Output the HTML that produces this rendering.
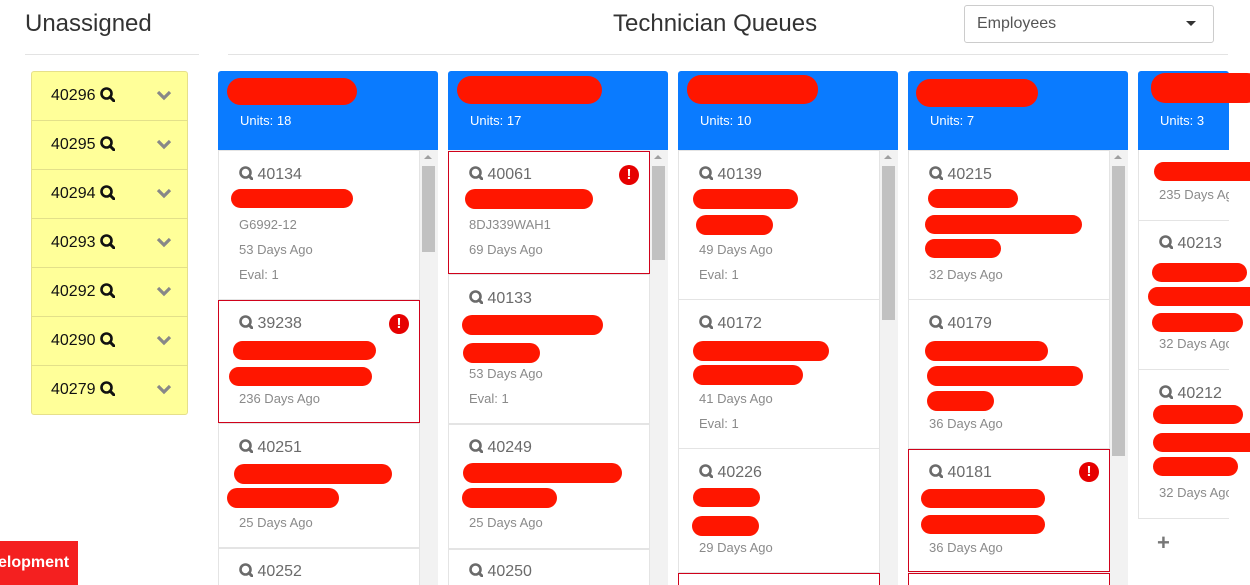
<!DOCTYPE html>
<html><head><meta charset="utf-8"><style>
*{margin:0;padding:0;box-sizing:border-box}
html,body{width:1250px;height:585px;overflow:hidden}
body{background:#fff;font-family:"Liberation Sans",sans-serif;position:relative}
.a{position:absolute}
.t{position:absolute;white-space:nowrap}
.b{position:absolute;background:#ff1600;border-radius:12px}
.hd{position:absolute;top:71px;height:79px;width:220px;background:#0a7bff;border-radius:3px 3px 0 0}
.un{position:absolute;left:22px;top:42px;color:#fff;font-size:13px}
.body{position:absolute;top:150px;height:435px;width:220px;background:#f2f2f2;overflow:hidden}
.sb{position:absolute;right:2px;top:0;width:16px;height:435px;background:#f2f2f2}
.th{position:absolute;left:2px;top:16px;width:13px;background:#c1c1c1}
.ar{position:absolute;left:4px;top:5px;width:0;height:0;border-left:4px solid transparent;border-right:4px solid transparent;border-bottom:4px solid #a0a0a0}
.c{position:absolute;left:0;width:202px;background:#fff;border:1px solid #e4e4e4}
.c.r{border:1px solid #d0021b}
.n{position:absolute;color:#6b6b6b;font-size:16px;line-height:18px}
.s{position:absolute;color:#8a8a8a;font-size:13px;line-height:16px}
.ex{position:absolute;width:20px;height:20px;border-radius:50%;background:#e60000;color:#fff;font-weight:bold;font-size:15px;line-height:20px;text-align:center}
.row{position:absolute;left:0;width:156px;height:49px;border-bottom:1px solid #e3e08a}
.rn{position:absolute;left:19px;top:15px;font-size:16px;color:#111;line-height:18px}
.ch{position:absolute;left:124px;top:17px}
</style></head><body>
<div class="t" style="left:25px;top:10px;font-size:24px;color:#333">Unassigned</div>
<div class="t" style="left:613px;top:10px;font-size:24px;color:#333">Technician Queues</div>
<div class="a" style="left:964px;top:5px;width:250px;height:38px;border:1px solid #ccc;border-radius:3px"></div>
<div class="t" style="left:977px;top:15px;font-size:16px;color:#555">Employees</div>
<div class="a" style="left:1186px;top:21px;border-left:5px solid transparent;border-right:5px solid transparent;border-top:5px solid #333"></div>
<div class="a" style="left:25px;top:54px;width:174px;height:1px;background:#e3e3e3"></div>
<div class="a" style="left:228px;top:54px;width:1000px;height:1px;background:#e3e3e3"></div>

<div class="a" style="left:31px;top:71px;width:157px;height:344px;background:#ffff99;border:1px solid #e6e08a;border-radius:3px">
<svg width="0" height="0" style="position:absolute"><defs><g id="q"><circle cx="6.5" cy="6.5" r="5" fill="none" stroke-width="2.6"/><line x1="10" y1="10" x2="14" y2="14" stroke-width="3" stroke-linecap="round"/></g><g id="cv"><polyline points="2,3 8,9 14,3" fill="none" stroke="#888" stroke-width="3.2"/></g></defs></svg>
<div class="row" style="top:0"><span class="rn">40296 <svg width="15" height="15" style="vertical-align:-2px" stroke="#111"><use href="#q"/></svg></span><svg class="ch" width="16" height="12"><use href="#cv"/></svg></div>
<div class="row" style="top:49px"><span class="rn">40295 <svg width="15" height="15" style="vertical-align:-2px" stroke="#111"><use href="#q"/></svg></span><svg class="ch" width="16" height="12"><use href="#cv"/></svg></div>
<div class="row" style="top:98px"><span class="rn">40294 <svg width="15" height="15" style="vertical-align:-2px" stroke="#111"><use href="#q"/></svg></span><svg class="ch" width="16" height="12"><use href="#cv"/></svg></div>
<div class="row" style="top:147px"><span class="rn">40293 <svg width="15" height="15" style="vertical-align:-2px" stroke="#111"><use href="#q"/></svg></span><svg class="ch" width="16" height="12"><use href="#cv"/></svg></div>
<div class="row" style="top:196px"><span class="rn">40292 <svg width="15" height="15" style="vertical-align:-2px" stroke="#111"><use href="#q"/></svg></span><svg class="ch" width="16" height="12"><use href="#cv"/></svg></div>
<div class="row" style="top:245px"><span class="rn">40290 <svg width="15" height="15" style="vertical-align:-2px" stroke="#111"><use href="#q"/></svg></span><svg class="ch" width="16" height="12"><use href="#cv"/></svg></div>
<div class="row" style="top:294px;border:none"><span class="rn">40279 <svg width="15" height="15" style="vertical-align:-2px" stroke="#111"><use href="#q"/></svg></span><svg class="ch" width="16" height="12"><use href="#cv"/></svg></div>
</div>

<!-- column 1 -->
<div class="hd" style="left:218px"><div class="un">Units: 18</div></div>
<div class="body" style="left:218px">
<div class="c" style="top:0;height:150px"><div class="n" style="left:20px;top:15px"><svg width="14" height="14" stroke="#6b6b6b" style="vertical-align:-1px"><use href="#q"/></svg> 40134</div><div class="s" style="left:20px;top:66px">G6992-12</div><div class="s" style="left:20px;top:91px">53 Days Ago</div><div class="s" style="left:20px;top:116px">Eval: 1</div></div>
<div class="c r" style="top:150px;height:123px"><div class="n" style="left:20px;top:14px"><svg width="14" height="14" stroke="#6b6b6b" style="vertical-align:-1px"><use href="#q"/></svg> 39238</div><div class="ex" style="left:170px;top:13px">!</div><div class="s" style="left:20px;top:90px">236 Days Ago</div></div>
<div class="c" style="top:273px;height:125px"><div class="n" style="left:20px;top:15px"><svg width="14" height="14" stroke="#6b6b6b" style="vertical-align:-1px"><use href="#q"/></svg> 40251</div><div class="s" style="left:20px;top:91px">25 Days Ago</div></div>
<div class="c" style="top:398px;height:37px;border-bottom:none"><div class="n" style="left:20px;top:14px"><svg width="14" height="14" stroke="#6b6b6b" style="vertical-align:-1px"><use href="#q"/></svg> 40252</div></div>
<div class="sb"><div class="ar"></div><div class="th" style="height:86px"></div></div>
</div>

<!-- column 2 -->
<div class="hd" style="left:448px"><div class="un">Units: 17</div></div>
<div class="body" style="left:448px">
<div class="c r" style="top:1px;height:123px"><div class="n" style="left:20px;top:14px"><svg width="14" height="14" stroke="#6b6b6b" style="vertical-align:-1px"><use href="#q"/></svg> 40061</div><div class="ex" style="left:170px;top:13px">!</div><div class="s" style="left:20px;top:65px">8DJ339WAH1</div><div class="s" style="left:20px;top:90px">69 Days Ago</div></div>
<div class="c" style="top:124px;height:150px"><div class="n" style="left:20px;top:15px"><svg width="14" height="14" stroke="#6b6b6b" style="vertical-align:-1px"><use href="#q"/></svg> 40133</div><div class="s" style="left:20px;top:91px">53 Days Ago</div><div class="s" style="left:20px;top:116px">Eval: 1</div></div>
<div class="c" style="top:274px;height:125px"><div class="n" style="left:20px;top:14px"><svg width="14" height="14" stroke="#6b6b6b" style="vertical-align:-1px"><use href="#q"/></svg> 40249</div><div class="s" style="left:20px;top:90px">25 Days Ago</div></div>
<div class="c" style="top:399px;height:36px;border-bottom:none"><div class="n" style="left:20px;top:13px"><svg width="14" height="14" stroke="#6b6b6b" style="vertical-align:-1px"><use href="#q"/></svg> 40250</div></div>
<div class="sb"><div class="ar"></div><div class="th" style="height:94px"></div></div>
</div>

<!-- column 3 -->
<div class="hd" style="left:678px"><div class="un">Units: 10</div></div>
<div class="body" style="left:678px">
<div class="c" style="top:0;height:150px"><div class="n" style="left:20px;top:15px"><svg width="14" height="14" stroke="#6b6b6b" style="vertical-align:-1px"><use href="#q"/></svg> 40139</div><div class="s" style="left:20px;top:91px">49 Days Ago</div><div class="s" style="left:20px;top:116px">Eval: 1</div></div>
<div class="c" style="top:149px;height:150px"><div class="n" style="left:20px;top:15px"><svg width="14" height="14" stroke="#6b6b6b" style="vertical-align:-1px"><use href="#q"/></svg> 40172</div><div class="s" style="left:20px;top:91px">41 Days Ago</div><div class="s" style="left:20px;top:116px">Eval: 1</div></div>
<div class="c" style="top:298px;height:125px"><div class="n" style="left:20px;top:15px"><svg width="14" height="14" stroke="#6b6b6b" style="vertical-align:-1px"><use href="#q"/></svg> 40226</div><div class="s" style="left:20px;top:91px">29 Days Ago</div></div>
<div class="c r" style="top:423px;height:12px;border-bottom:none"></div>
<div class="sb"><div class="ar"></div><div class="th" style="height:154px"></div></div>
</div>

<!-- column 4 -->
<div class="hd" style="left:908px"><div class="un">Units: 7</div></div>
<div class="body" style="left:908px">
<div class="c" style="top:0;height:150px"><div class="n" style="left:20px;top:15px"><svg width="14" height="14" stroke="#6b6b6b" style="vertical-align:-1px"><use href="#q"/></svg> 40215</div><div class="s" style="left:20px;top:116px">32 Days Ago</div></div>
<div class="c" style="top:149px;height:150px"><div class="n" style="left:20px;top:15px"><svg width="14" height="14" stroke="#6b6b6b" style="vertical-align:-1px"><use href="#q"/></svg> 40179</div><div class="s" style="left:20px;top:116px">36 Days Ago</div></div>
<div class="c r" style="top:299px;height:123px"><div class="n" style="left:20px;top:14px"><svg width="14" height="14" stroke="#6b6b6b" style="vertical-align:-1px"><use href="#q"/></svg> 40181</div><div class="ex" style="left:170px;top:12px">!</div><div class="s" style="left:20px;top:90px">36 Days Ago</div></div>
<div class="c r" style="top:423px;height:12px;border-bottom:none"></div>
<div class="sb"><div class="ar"></div><div class="th" style="height:290px"></div></div>
</div>

<!-- column 5 -->
<div class="hd" style="left:1138px;width:91px"><div class="un">Units: 3</div></div>
<div class="body" style="left:1138px;width:91px;background:#fff">
<div class="c" style="top:0;height:71px;width:110px;border-top:none"><div class="s" style="left:20px;top:37px">235 Days Ago</div></div>
<div class="c" style="top:70px;height:150px;width:110px"><div class="n" style="left:20px;top:14px"><svg width="14" height="14" stroke="#6b6b6b" style="vertical-align:-1px"><use href="#q"/></svg> 40213</div><div class="s" style="left:20px;top:115px">32 Days Ago</div></div>
<div class="c" style="top:219px;height:150px;width:110px"><div class="n" style="left:20px;top:15px"><svg width="14" height="14" stroke="#6b6b6b" style="vertical-align:-1px"><use href="#q"/></svg> 40212</div><div class="s" style="left:20px;top:115px">32 Days Ago</div></div>
<div class="t" style="left:19px;top:380px;font-size:22px;font-weight:bold;color:#777">+</div>
</div>

<!-- redaction blobs -->
<div class="b" style="left:227px;top:78px;width:130px;height:27px;border-radius:14px"></div>
<div class="b" style="left:457px;top:76px;width:145px;height:28px;border-radius:14px"></div>
<div class="b" style="left:687px;top:75px;width:131px;height:29px;border-radius:14px"></div>
<div class="b" style="left:916px;top:79px;width:122px;height:28px;border-radius:14px"></div>
<div class="b" style="left:1151px;top:73px;width:110px;height:30px;border-radius:14px"></div>

<div class="b" style="left:231px;top:189px;width:122px;height:19px"></div>
<div class="b" style="left:233px;top:341px;width:143px;height:19px"></div>
<div class="b" style="left:229px;top:367px;width:143px;height:19px"></div>
<div class="b" style="left:234px;top:464px;width:158px;height:20px"></div>
<div class="b" style="left:227px;top:488px;width:112px;height:20px"></div>

<div class="b" style="left:465px;top:189px;width:128px;height:20px"></div>
<div class="b" style="left:462px;top:315px;width:141px;height:20px"></div>
<div class="b" style="left:463px;top:343px;width:77px;height:20px"></div>
<div class="b" style="left:463px;top:463px;width:159px;height:20px"></div>
<div class="b" style="left:462px;top:488px;width:95px;height:20px"></div>

<div class="b" style="left:693px;top:189px;width:105px;height:20px"></div>
<div class="b" style="left:696px;top:215px;width:77px;height:20px"></div>
<div class="b" style="left:693px;top:341px;width:136px;height:20px"></div>
<div class="b" style="left:693px;top:365px;width:110px;height:20px"></div>
<div class="b" style="left:693px;top:488px;width:67px;height:19px"></div>
<div class="b" style="left:692px;top:516px;width:67px;height:20px"></div>

<div class="b" style="left:928px;top:189px;width:90px;height:19px"></div>
<div class="b" style="left:925px;top:215px;width:157px;height:19px"></div>
<div class="b" style="left:925px;top:239px;width:76px;height:19px"></div>
<div class="b" style="left:925px;top:341px;width:123px;height:20px"></div>
<div class="b" style="left:927px;top:366px;width:156px;height:20px"></div>
<div class="b" style="left:927px;top:391px;width:67px;height:20px"></div>
<div class="b" style="left:921px;top:489px;width:124px;height:19px"></div>
<div class="b" style="left:921px;top:515px;width:124px;height:19px"></div>

<div class="b" style="left:1154px;top:162px;width:96px;height:19px;border-radius:12px 0 0 12px"></div>
<div class="b" style="left:1152px;top:263px;width:95px;height:19px"></div>
<div class="b" style="left:1148px;top:287px;width:102px;height:19px;border-radius:12px 0 0 12px"></div>
<div class="b" style="left:1152px;top:313px;width:91px;height:19px"></div>
<div class="b" style="left:1153px;top:405px;width:90px;height:19px"></div>
<div class="b" style="left:1153px;top:433px;width:97px;height:19px;border-radius:12px 0 0 12px"></div>
<div class="b" style="left:1153px;top:457px;width:85px;height:19px"></div>

<div class="a" style="left:0;top:541px;width:78px;height:44px;background:#f42020;color:#fff;font-weight:bold;font-size:16px;line-height:44px;overflow:hidden;white-space:nowrap"><span style="margin-left:-2px">elopment</span></div>
</body></html>
